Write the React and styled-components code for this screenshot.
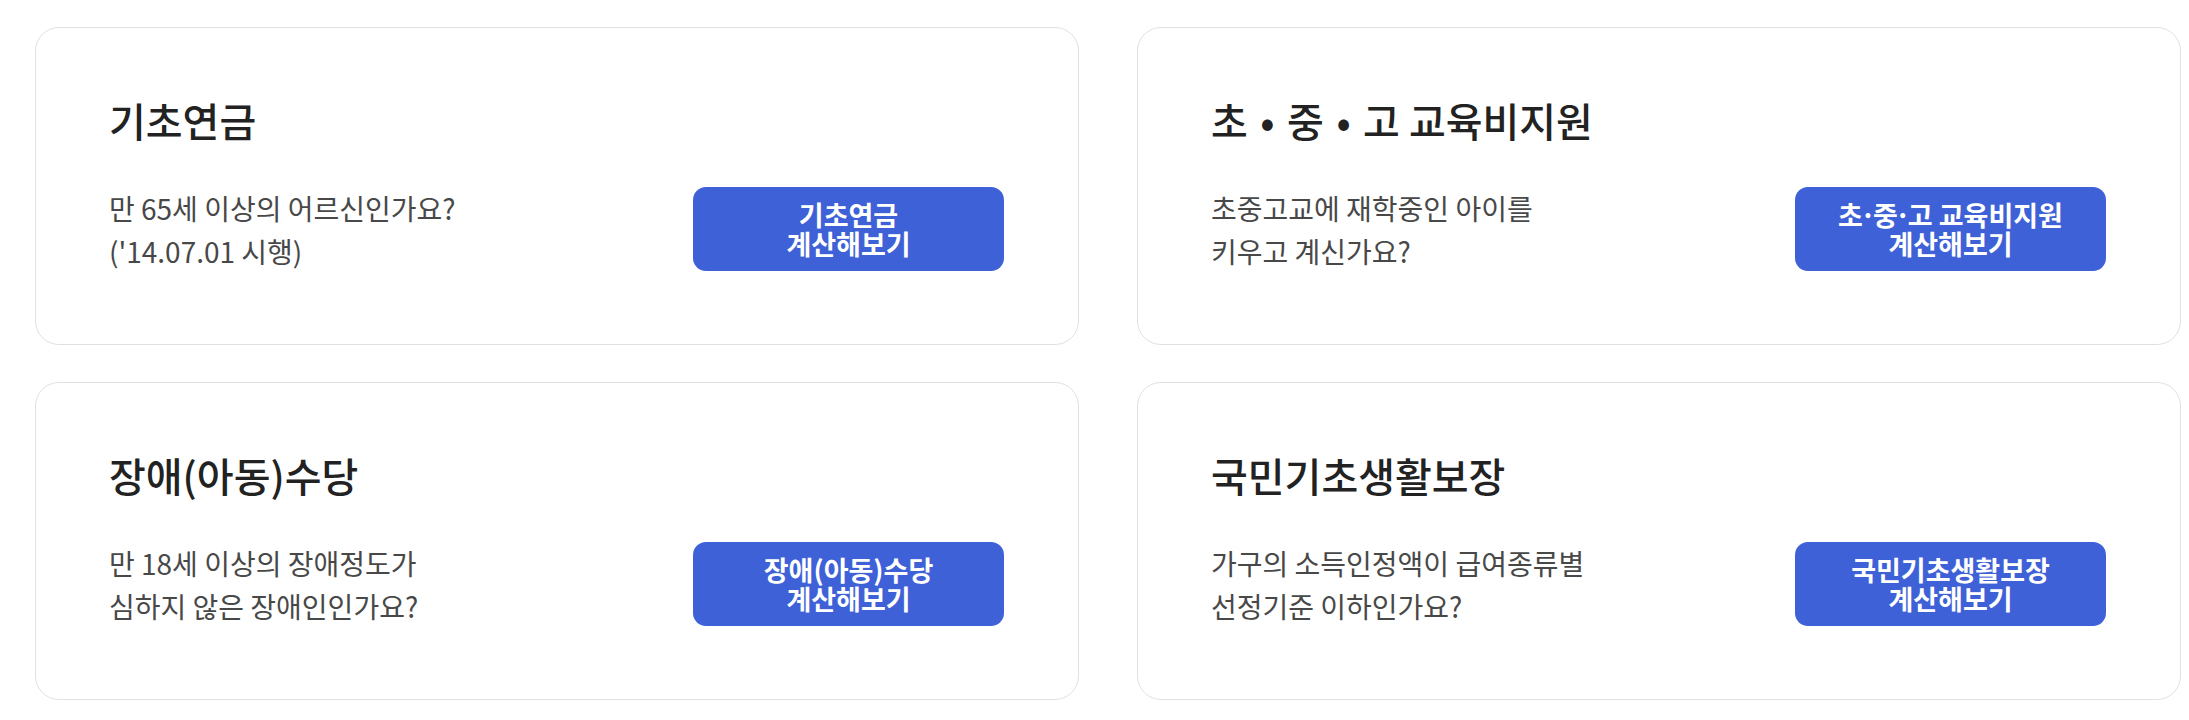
import React from 'react';
import styled, { createGlobalStyle } from 'styled-components';

const GlobalStyle = createGlobalStyle`
  html, body {
    margin: 0;
    padding: 0;
    background: #fff;
  }
  body {
    font-family: "Noto Sans CJK KR", "Noto Sans", sans-serif;
    -webkit-font-smoothing: antialiased;
  }
`;

const Grid = styled.section`
  display: grid;
  grid-template-columns: 1fr 1fr;
  column-gap: 58px;
  row-gap: 37px;
  padding: 27px 8px 0 35px;
`;

const Card = styled.article`
  box-sizing: border-box;
  height: 318px;
  padding: 67px 74px 0 73px;
  border: 1px solid #e1e1e1;
  border-radius: 24px;
  background: #fff;
`;

const Title = styled.h3`
  margin: 0 0 42px;
  font-size: 40px;
  line-height: 50px;
  font-weight: 500;
  color: #222;
  white-space: nowrap;
`;

const Row = styled.div`
  display: flex;
  align-items: center;
  justify-content: space-between;
`;

const Desc = styled.p`
  margin: 0;
  font-size: 28px;
  line-height: 43px;
  font-weight: 400;
  color: #484848;
  white-space: nowrap;
`;

const CalcButton = styled.button`
  box-sizing: border-box;
  flex: 0 0 311px;
  height: 84px;
  margin-top: -2px;
  padding: 0;
  border: 0;
  border-radius: 13px;
  background: #3f61d7;
  color: #fff;
  font-family: inherit;
  font-size: 27px;
  line-height: 29px;
  font-weight: 700;
  cursor: pointer;
`;

// separators: a round bullet in the title, a narrow middle dot in the button
const TitleDot = styled.span`
  margin: 0 3.5px;
`;

const Dot = styled.span`
  margin: 0 -3px;
`;

const splitDots = (text, Sep, glyph) =>
  text.split('·').flatMap((part, i) =>
    i === 0 ? [part] : [<Sep key={i}>{glyph}</Sep>, part]
  );

const items = [
  {
    title: '기초연금',
    desc: ['만 65세 이상의 어르신인가요?', "('14.07.01 시행)"],
    label: '기초연금',
  },
  {
    title: '초 · 중 · 고 교육비지원',
    desc: ['초중고교에 재학중인 아이를', '키우고 계신가요?'],
    label: '초·중·고 교육비지원',
  },
  {
    title: '장애(아동)수당',
    desc: ['만 18세 이상의 장애정도가', '심하지 않은 장애인인가요?'],
    label: '장애(아동)수당',
  },
  {
    title: '국민기초생활보장',
    desc: ['가구의 소득인정액이 급여종류별', '선정기준 이하인가요?'],
    label: '국민기초생활보장',
  },
];

const App = () => (
  <>
    <GlobalStyle />
    <Grid>
      {items.map((item) => (
        <Card key={item.title}>
          <Title>{splitDots(item.title, TitleDot, '•')}</Title>
          <Row>
            <Desc>
              {item.desc[0]}
              <br />
              {item.desc[1]}
            </Desc>
            <CalcButton type="button">
              {splitDots(item.label, Dot, '·')}
              <br />
              계산해보기
            </CalcButton>
          </Row>
        </Card>
      ))}
    </Grid>
  </>
);

export default App;
